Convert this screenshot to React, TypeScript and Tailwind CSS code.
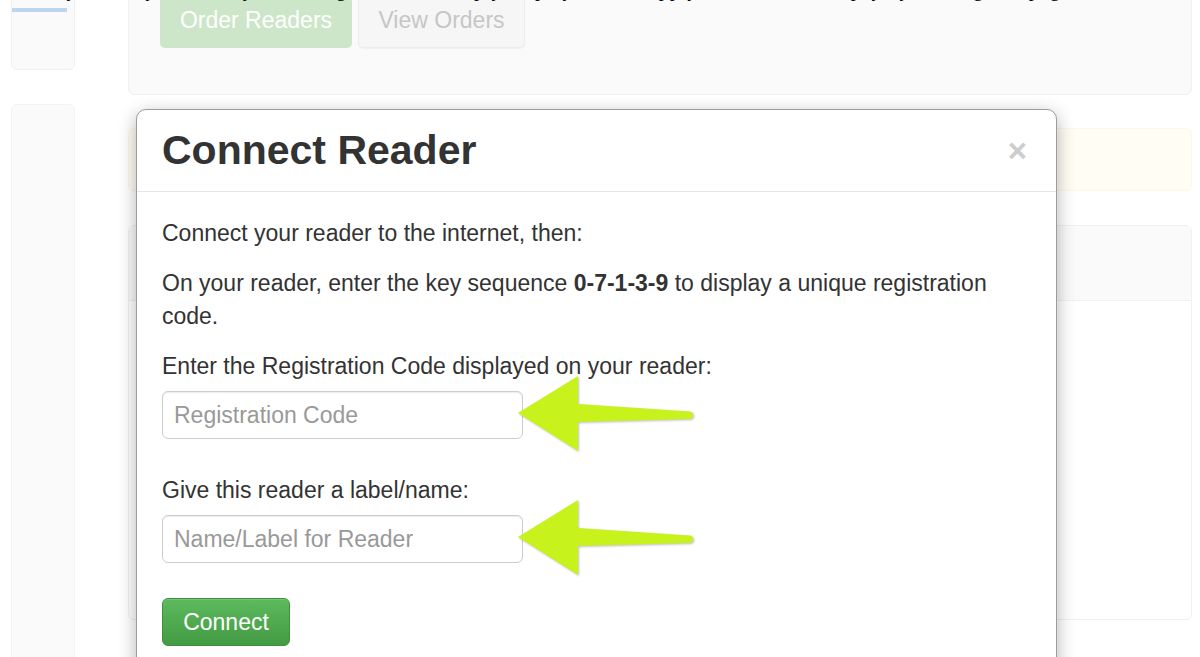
import React from 'react';

const sans = "font-['Liberation_Sans',Arial,sans-serif]";

const Arrow: React.FC<{ className?: string }> = ({ className }) => (
  <svg
    className={className}
    viewBox="0 0 180 80"
    width={180}
    height={80}
    style={{ filter: 'drop-shadow(1px 1px 1px rgba(0,0,0,0.25))' }}
  >
    <path
      d="M3 40 L63 3 L63 31 L175 38.5 A3.8 3.8 0 0 1 175 46 L63 49 L63 78 Z"
      fill="#c8f21c"
    />
  </svg>
);

const Field: React.FC<{ label: string; placeholder: string }> = ({ label, placeholder }) => (
  <div className="mb-[35px]">
    <label className="mb-[8px] block">{label}</label>
    <div className="relative">
      <input
        type="text"
        placeholder={placeholder}
        className="block h-[48px] w-[361px] rounded-[6px] border border-[#cccccc] bg-white px-[11px] text-[23px] text-[#555] shadow-[inset_0_1px_1px_rgba(0,0,0,0.075)] outline-none placeholder:text-[#999]"
      />
      <Arrow className="absolute left-[353px] top-[-18px]" />
    </div>
  </div>
);

const ConnectReaderModal: React.FC = () => (
  <div className="absolute left-[136px] top-[109px] w-[921px] rounded-[10px] border border-[#9c9c9c] bg-white shadow-[0_5px_18px_rgba(0,0,0,0.3)]">
    <div className="flex items-center justify-between border-b border-[#e5e5e5] pb-[19px] pl-[25px] pr-[29px] pt-[18px]">
      <h3 className="text-[41px] font-bold leading-[44px] text-[#333]">Connect Reader</h3>
      <button className="text-[33px] font-bold leading-none text-[#cdcdcd]">×</button>
    </div>
    <div className="px-[25px] pb-[40px] pt-[25px] text-[23px] leading-[33px] text-[#333]">
      <p className="mb-[17px]">Connect your reader to the internet, then:</p>
      <p className="mb-[17px] max-w-[850px]">
        On your reader, enter the key sequence <b>0-7-1-3-9</b> to display a unique registration code.
      </p>
      <Field label="Enter the Registration Code displayed on your reader:" placeholder="Registration Code" />
      <Field label="Give this reader a label/name:" placeholder="Name/Label for Reader" />
      <button className="h-[48px] w-[128px] rounded-[6px] border border-[#3e8f3e] bg-gradient-to-b from-[#5dba5d] to-[#439b43] text-[23px] text-white shadow-[inset_0_1px_0_rgba(255,255,255,0.15)]">
        Connect
      </button>
    </div>
  </div>
);

export default function App() {
  return (
    <div className={`relative h-[657px] w-[1200px] overflow-hidden bg-white ${sans}`}>
      {/* cut-off caption above the page: only descenders show */}
      <div className="absolute left-0 top-0 z-10 h-[3px] w-full overflow-hidden">
        <p className="-mt-[21px] whitespace-nowrap pl-[40px] font-['Liberation_Serif',serif] text-[20px] leading-[20px] tracking-[1px] text-black">
          Any reader you order, you can register, then simply display it here, apply a label to it and pay by it using this page.
        </p>
      </div>

      <div className="flex items-start">
        {/* left column */}
        <div className="ml-[11px] -mt-[9px] w-[64px]">
          <div className="h-[79px] rounded-[6px] border border-[#f1f1f1] bg-[#fafafa] pt-[16px]">
            <div className="h-[4px] w-[55px] bg-[#bcd6ef]" />
          </div>
          <div className="mt-[34px] h-[600px] rounded-[6px] border border-[#f3f3f3] bg-[#fafafa]" />
        </div>

        {/* main column */}
        <div className="ml-[53px] -mt-[9px] w-[1064px]">
          <div className="h-[104px] rounded-[6px] border border-[#f1f1f1] bg-[#fafafa] pl-[31px]">
            <div className="flex gap-[6px]">
              <button className="h-[56px] w-[192px] rounded-[5px] bg-[#cde6ca] text-[23px] text-white">Order Readers</button>
              <button className="h-[56px] w-[167px] rounded-[5px] border border-[#ececec] bg-[#f6f6f6] text-[23px] text-[#c6c6c6] shadow-[0_1px_1px_rgba(0,0,0,0.04)]">
                View Orders
              </button>
            </div>
          </div>
          <div className="mt-[33px] h-[63px] rounded-[6px] border border-[#fcf8e8] bg-[#fffdf4]" />
          <div className="mt-[34px] h-[395px] rounded-[6px] border border-[#f0f0f0] bg-white">
            <div className="h-[75px] border-b border-[#f0f0f0] bg-[#fafafa]" />
          </div>
        </div>
      </div>

      <ConnectReaderModal />
    </div>
  );
}
